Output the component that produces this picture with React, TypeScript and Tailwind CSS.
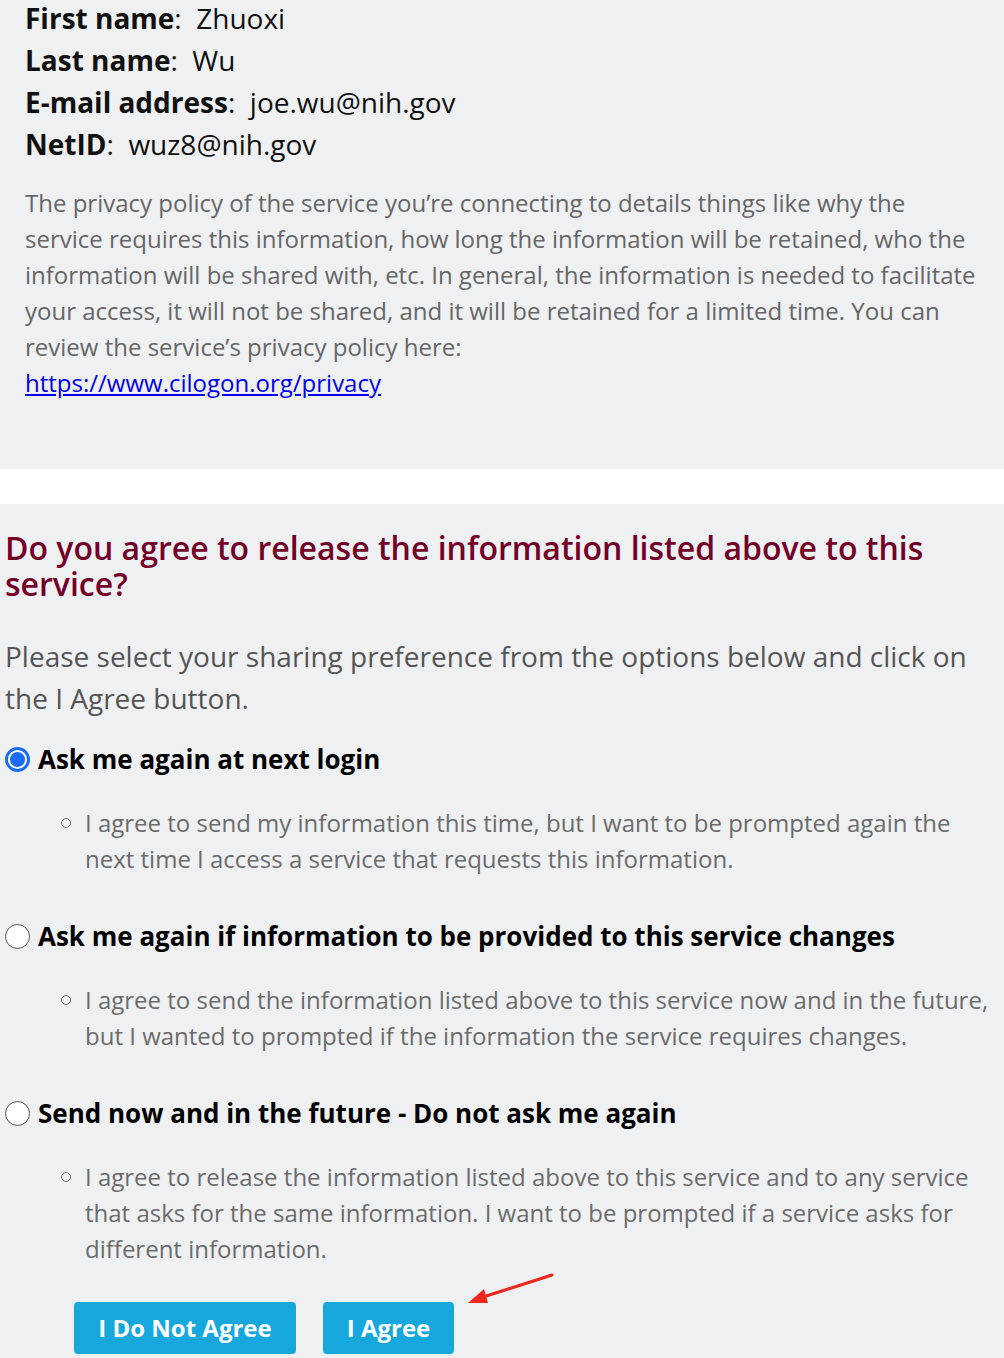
import React from 'react';

const infoRows = [
  { label: 'First name', value: 'Zhuoxi' },
  { label: 'Last name', value: 'Wu' },
  { label: 'E-mail address', value: 'joe.wu@nih.gov' },
  { label: 'NetID', value: 'wuz8@nih.gov' },
];

const options = [
  {
    title: 'Ask me again at next login',
    detail:
      'I agree to send my information this time, but I want to be prompted again the next time I access a service that requests this information.',
    checked: true,
  },
  {
    title: 'Ask me again if information to be provided to this service changes',
    detail:
      'I agree to send the information listed above to this service now and in the future, but I wanted to prompted if the information the service requires changes.',
    checked: false,
  },
  {
    title: 'Send now and in the future - Do not ask me again',
    detail:
      'I agree to release the information listed above to this service and to any service that asks for the same information. I want to be prompted if a service asks for different information.',
    checked: false,
  },
];

function Radio({ checked }: { checked: boolean }) {
  if (checked) {
    return (
      <span className="flex h-[25px] w-[25px] shrink-0 items-center justify-center rounded-full border-[3px] border-[#1a6cf5] bg-white">
        <span className="h-[15px] w-[15px] rounded-full bg-[#1a6cf5]" />
      </span>
    );
  }
  return <span className="h-[25px] w-[25px] shrink-0 rounded-full border-[1.5px] border-[#555] bg-white" />;
}

export default function App() {
  return (
    <div className="min-h-[1358px] bg-[#eff0f2] font-['Open_Sans',sans-serif]">
      <section className="bg-[#eff0f2] px-[25px] pb-[68px]">
        <div className="-mt-[3px]">
          {infoRows.map(row => (
            <div key={row.label} className="text-[28px] leading-[42px] text-[#111]">
              <span className="font-bold">{row.label}</span>:&nbsp; {row.value}
            </div>
          ))}
        </div>
        <p className="mt-[20px] max-w-[955px] text-[24px] leading-[36px] text-[#666]">
          The privacy policy of the service you’re connecting to details things like why the service requires
          this information, how long the information will be retained, who the information will be shared with,
          etc. In general, the information is needed to facilitate your access, it will not be shared, and it
          will be retained for a limited time. You can review the service’s privacy policy here:
          <br />
          <a href="#" className="text-[#0000ee] underline">
            https://www.cilogon.org/privacy
          </a>
        </p>
      </section>

      <div className="h-[35px] bg-white" />

      <section className="bg-[#eff0f2] pl-[5px] pr-[10px] pt-[26px] pb-[20px]">
        <h2 className="max-w-[960px] text-[32px] font-semibold leading-[36px] text-[#730028]">
          Do you agree to release the information listed above to this service?
        </h2>
        <p className="mt-[33px] text-[28px] leading-[42px] text-[#555]">
          Please select your sharing preference from the options below and click on the I Agree button.
        </p>

        <div className="mt-[22px]">
          {options.map((opt, i) => (
            <div key={opt.title} className={i === 0 ? '' : 'mt-[41px]'}>
              <label className="flex items-center gap-[8px] text-[26px] font-bold leading-[36px] text-black">
                <Radio checked={opt.checked} />
                {opt.title}
              </label>
              <div className="mt-[28px] flex pl-[56px]">
                <span className="mt-[13px] h-[10px] w-[10px] shrink-0 rounded-full border border-[#777]" />
                <p className="ml-[14px] max-w-[910px] text-[24px] leading-[36px] text-[#6b6b6b]">{opt.detail}</p>
              </div>
            </div>
          ))}
        </div>

        <div className="relative mt-[35px] flex gap-[27px] pl-[69px]">
          <button className="h-[52px] w-[222px] rounded-[4px] bg-[#16a8dd] text-[24px] font-bold text-white">
            I Do Not Agree
          </button>
          <button className="h-[52px] w-[131px] rounded-[4px] bg-[#16a8dd] text-[24px] font-bold text-white">
            I Agree
          </button>

          <svg
            className="absolute left-[459px] -top-[30px]"
            width="92"
            height="36"
            viewBox="0 0 92 36"
          >
            <line x1="88" y1="3" x2="16" y2="26" stroke="#f0271c" strokeWidth="3" strokeLinecap="round" />
            <polygon points="4,31 20,17 24,31" fill="#f0271c" />
          </svg>
        </div>
      </section>
    </div>
  );
}
